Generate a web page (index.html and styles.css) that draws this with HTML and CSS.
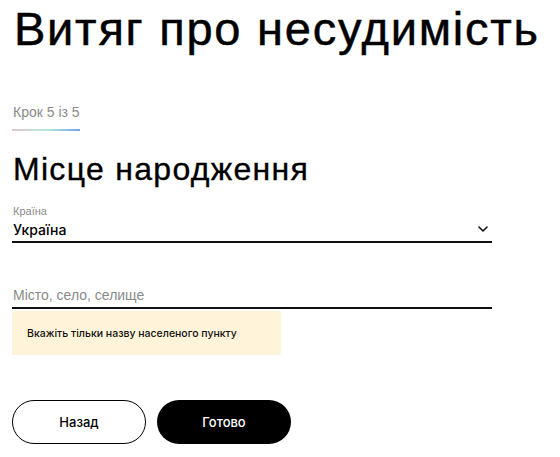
FILE: index.html
```html
<!DOCTYPE html>
<html lang="uk">
<head>
  <meta charset="UTF-8" />
  <title>Витяг про несудимість</title>
  <link rel="stylesheet" href="styles.css">
</head>
<body>

  <div class="page">
    <h1 class="title">Витяг про несудимість</h1>

    <div class="step">
      <span class="step-text">Крок 5 із 5</span>
      <div class="step-line"></div>
    </div>

    <h2 class="subtitle">Місце народження</h2>

    <div class="field select-field">
      <label class="field-label">Країна</label>
      <div class="field-row">
        <span class="field-value">Україна</span>
        <svg class="chevron" width="10" height="6" viewBox="0 0 10 6">
          <path d="M1 1 L5 5 L9 1" fill="none" stroke="#111" stroke-width="1.6" stroke-linecap="round" stroke-linejoin="round" />
        </svg>
      </div>
    </div>

    <div class="field city-field">
      <input type="text" class="field-input" placeholder="Місто, село, селище" />
    </div>

    <div class="hint">Вкажіть тільки назву населеного пункту</div>

    <div class="buttons">
      <button class="btn btn-back">Назад</button>
      <button class="btn btn-done">Готово</button>
    </div>
  </div>

</body>
</html>
```

FILE: styles.css
```css
body {
  font-family: "Liberation Sans", Arial, sans-serif;
  margin: 0;
  background-color: #ffffff;
  color: #000000;
}

.page {
  width: 480px;
  padding-left: 12px;
}

.title {
  font-size: 47px;
  font-weight: 400;
  line-height: 52px;
  margin: 3px 0 0 2px;
  white-space: nowrap;
  letter-spacing: 1.75px;
  -webkit-text-stroke: 0.5px #000;
}

.step {
  margin-top: 49px;
  display: inline-flex;
  flex-direction: column;
}

.step-text {
  font-size: 14px;
  line-height: 16px;
  color: #8a8a8a;
  padding-left: 1px;
}

.step-line {
  height: 2px;
  width: 68px;
  margin-top: 9px;
  background: linear-gradient(90deg, #e2c6d0 0%, #b5ecd9 50%, #6fa3f0 100%);
}

.subtitle {
  font-size: 32px;
  font-weight: 400;
  line-height: 36px;
  margin: 20px 0 0 1px;
  letter-spacing: 1.3px;
  -webkit-text-stroke: 0.35px #000;
}

.field {
  border-bottom: 2px solid #111111;
}

.select-field {
  margin-top: 18px;
}

.field-label {
  display: block;
  font-size: 11px;
  line-height: 12px;
  color: #8a8a8a;
  padding-left: 1px;
}

.field-row {
  display: flex;
  justify-content: space-between;
  align-items: center;
  height: 24px;
  padding-right: 4px;
}

.field-value {
  font-family: Inter, "Liberation Sans", sans-serif;
  font-size: 14px;
  font-weight: 500;
  padding-left: 1px;
}

.chevron {
  display: block;
}

.city-field {
  margin-top: 40px;
}

.field-input {
  width: 100%;
  box-sizing: border-box;
  border: none;
  outline: none;
  padding: 0 0 0 1px;
  height: 24px;
  font-family: "Liberation Sans", Arial, sans-serif;
  font-size: 14px;
  background: transparent;
}

.field-input::placeholder {
  color: #8a8a8a;
}

.hint {
  margin-top: 2px;
  width: 269px;
  height: 44px;
  box-sizing: border-box;
  padding-left: 15px;
  display: flex;
  align-items: center;
  background-color: #fff4d9;
  font-family: Inter, "Liberation Sans", sans-serif;
  font-size: 10.5px;
  font-weight: 500;
  color: #111111;
}

.buttons {
  display: flex;
  gap: 11px;
  margin-top: 45px;
}

.btn {
  width: 134px;
  height: 44px;
  border-radius: 22px;
  font-family: Inter, "Liberation Sans", sans-serif;
  font-size: 13px;
  font-weight: 500;
  cursor: pointer;
}

.btn-back {
  background-color: #ffffff;
  border: 1.5px solid #000000;
  color: #000000;
}

.btn-done {
  background-color: #000000;
  border: none;
  color: #ffffff;
}
```
